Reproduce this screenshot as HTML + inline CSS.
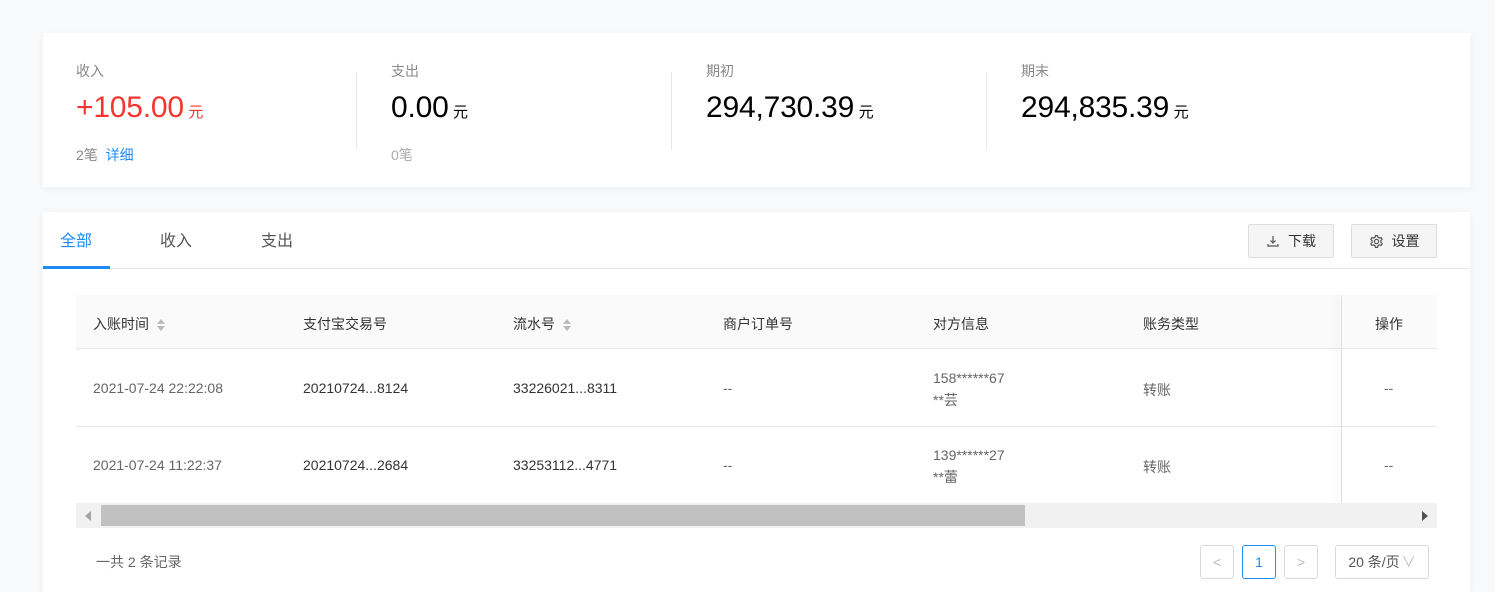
<!DOCTYPE html><html><head><meta charset="utf-8"><style>
*{margin:0;padding:0;box-sizing:border-box}
body{width:1495px;height:587px;background:#f8f9fa;font-family:"Liberation Sans","Noto Sans CJK SC",sans-serif;position:relative;overflow:hidden;color:#333}
.card{position:absolute;background:#fff;box-shadow:0 2px 8px rgba(0,0,0,.04)}
.a{position:absolute;white-space:nowrap}
.lbl{font-size:14px;color:#888}
.num{font-size:30px;color:#000;letter-spacing:-0.2px}
.yuan{font-size:15px;color:#000}
.sep{position:absolute;top:72px;width:1px;height:78px;background:#e8e8e8}
.t{font-size:14px;color:#333}
.g{color:#666}
.btn{position:absolute;top:224px;height:34px;border:1px solid #ddd;background:#f5f5f5;border-radius:2px;font-size:14px;color:#333;display:flex;align-items:center;justify-content:center;gap:8px}
.pg{position:absolute;top:545px;height:34px;border:1px solid #d9d9d9;border-radius:3px;background:#fff;display:flex;align-items:center;justify-content:center;font-size:14px;color:#bbb}
.sort{display:inline-block;vertical-align:middle;margin-left:8px;width:8px;height:12px;position:relative}
.sort:before{content:"";position:absolute;top:0;left:0;border-left:4px solid transparent;border-right:4px solid transparent;border-bottom:5px solid #bbb}
.sort:after{content:"";position:absolute;bottom:0;left:0;border-left:4px solid transparent;border-right:4px solid transparent;border-top:5px solid #bbb}
</style></head><body>
<div class="card" style="left:43px;top:33px;width:1427px;height:154px"></div>
<div class="a lbl" style="left:76px;top:61px">收入</div>
<div class="a" style="left:76px;top:91px"><span class="num" style="color:#f5352f">+105.00</span> <span class="yuan" style="color:#f5352f">元</span></div>
<div class="a lbl" style="left:76px;top:145px">2笔 &nbsp;<span style="color:#1d8cf8">详细</span></div>
<div class="sep" style="left:356px"></div>
<div class="a lbl" style="left:391px;top:61px">支出</div>
<div class="a" style="left:391px;top:91px"><span class="num">0.00</span> <span class="yuan">元</span></div>
<div class="a lbl" style="left:391px;top:145px;color:#aaa">0笔</div>
<div class="sep" style="left:671px"></div>
<div class="a lbl" style="left:706px;top:61px">期初</div>
<div class="a" style="left:706px;top:91px"><span class="num">294,730.39</span> <span class="yuan">元</span></div>
<div class="sep" style="left:986px"></div>
<div class="a lbl" style="left:1021px;top:61px">期末</div>
<div class="a" style="left:1021px;top:91px"><span class="num">294,835.39</span> <span class="yuan">元</span></div>

<div class="card" style="left:43px;top:212px;width:1427px;height:380px"></div>
<div class="a" style="left:60px;top:232px;font-size:16px;color:#1d8cf8;line-height:20px">全部</div>
<div class="a" style="left:160px;top:232px;font-size:16px;color:#555;line-height:20px">收入</div>
<div class="a" style="left:261px;top:232px;font-size:16px;color:#555;line-height:20px">支出</div>
<div class="a" style="left:43px;top:268px;width:1427px;height:1px;background:#e8e8e8"></div>
<div class="a" style="left:43px;top:266px;width:67px;height:3px;background:#1d8cf8"></div>
<div class="btn" style="left:1248px;width:86px"><svg width="14" height="14" viewBox="0 0 14 14" fill="none" stroke="#555" stroke-width="1.2"><path d="M7 2v7M4.5 6.5L7 9l2.5-2.5M2 10v2h10v-2"/></svg>下载</div>
<div class="btn" style="left:1351px;width:86px"><svg width="15" height="15" viewBox="0 0 14 14" fill="none" stroke="#555" stroke-width="1.1"><circle cx="7" cy="7" r="2"/><path d="M6 1.5h2l.4 1.6 1.3.7 1.6-.5 1 1.7-1.2 1.2v1.6l1.2 1.2-1 1.7-1.6-.5-1.3.7L8 12.5H6l-.4-1.6-1.3-.7-1.6.5-1-1.7 1.2-1.2V6.2L1.7 5l1-1.7 1.6.5 1.3-.7z"/></svg>设置</div>

<div class="a" style="left:76px;top:295px;width:1361px;height:54px;background:#fafafa;border-bottom:1px solid #e8e8e8"></div>
<div class="a t" style="left:93px;top:314px">入账时间<span class="sort"></span></div>
<div class="a t" style="left:303px;top:314px">支付宝交易号</div>
<div class="a t" style="left:513px;top:314px">流水号<span class="sort"></span></div>
<div class="a t" style="left:723px;top:314px">商户订单号</div>
<div class="a t" style="left:933px;top:314px">对方信息</div>
<div class="a t" style="left:1143px;top:314px">账务类型</div>
<div class="a t" style="left:1375px;top:314px">操作</div>
<div class="a" style="left:76px;top:426px;width:1361px;height:1px;background:#e8e8e8"></div>
<div class="a" style="left:1341px;top:295px;width:1px;height:208px;background:#e0e0e0;box-shadow:-3px 0 6px rgba(0,0,0,.12)"></div>

<div class="a t g" style="left:93px;top:380px">2021-07-24 22:22:08</div>
<div class="a t" style="left:303px;top:380px">20210724...8124</div>
<div class="a t" style="left:513px;top:380px">33226021...8311</div>
<div class="a t g" style="left:723px;top:380px">--</div>
<div class="a t g" style="left:933px;top:367px;line-height:22px">158******67<br>**芸</div>
<div class="a t g" style="left:1143px;top:380px">转账</div>
<div class="a t g" style="left:1384px;top:380px">--</div>

<div class="a t g" style="left:93px;top:457px">2021-07-24 11:22:37</div>
<div class="a t" style="left:303px;top:457px">20210724...2684</div>
<div class="a t" style="left:513px;top:457px">33253112...4771</div>
<div class="a t g" style="left:723px;top:457px">--</div>
<div class="a t g" style="left:933px;top:444px;line-height:22px">139******27<br>**蕾</div>
<div class="a t g" style="left:1143px;top:457px">转账</div>
<div class="a t g" style="left:1384px;top:457px">--</div>

<div class="a" style="left:76px;top:503px;width:1361px;height:25px;background:#f1f1f1"></div>
<div class="a" style="left:101px;top:505px;width:924px;height:21px;background:#c1c1c1"></div>
<div class="a" style="left:85px;top:511px;width:0;height:0;border-top:5px solid transparent;border-bottom:5px solid transparent;border-right:6px solid #a3a3a3"></div>
<div class="a" style="left:1422px;top:511px;width:0;height:0;border-top:5px solid transparent;border-bottom:5px solid transparent;border-left:6px solid #505050"></div>

<div class="a t g" style="left:96px;top:552px">一共 2 条记录</div>
<div class="pg" style="left:1200px;width:34px">&lt;</div>
<div class="pg" style="left:1242px;width:34px;border-color:#1d8cf8;color:#1d8cf8">1</div>
<div class="pg" style="left:1284px;width:34px">&gt;</div>
<div class="pg" style="left:1335px;width:94px;color:#555">20 条/页<span style="color:#bbb;margin-left:2px">∨</span></div>
</body></html>
